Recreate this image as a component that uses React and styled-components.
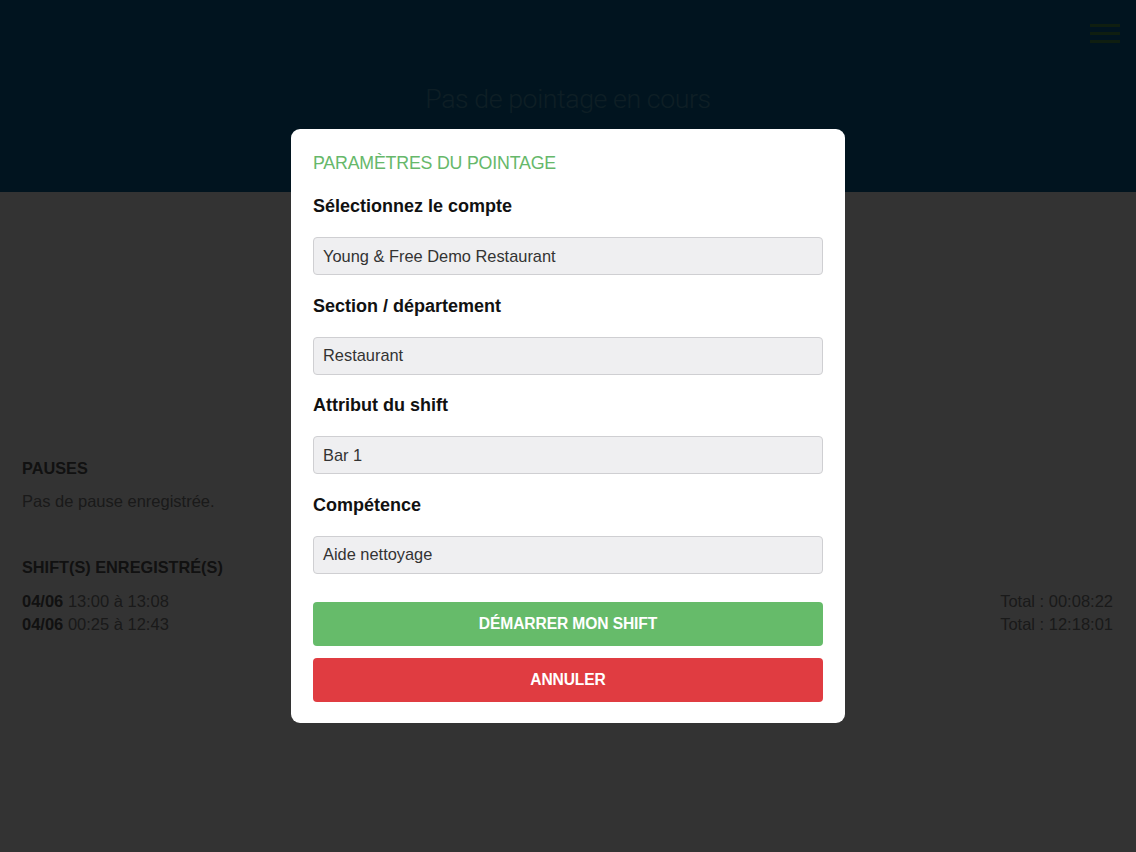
import React from "react";
import styled, { createGlobalStyle } from "styled-components";

const Global = createGlobalStyle`
  html, body { margin: 0; padding: 0; background: #ffffff; }
  body { font-family: "Liberation Sans", Arial, sans-serif; }
  * { box-sizing: border-box; }
`;

const Page = styled.div`
  width: 1136px;
  height: 852px;
  background: #ffffff;
  display: flex;
  flex-direction: column;
  overflow: hidden;
`;

const Header = styled.header`
  height: 192px;
  background: #05649b;
  display: grid;
  grid-template-rows: 1fr;
  position: relative;
`;

const HeaderTitle = styled.h1`
  margin: 0;
  padding-top: 83px;
  text-align: center;
  font-family: Roboto, "Liberation Sans", sans-serif;
  font-weight: 300;
  font-size: 26.7px;
  letter-spacing: -0.4px;
  color: #4798b8;
`;

const MenuButton = styled.button`
  position: absolute;
  top: 24px;
  right: 16px;
  width: 30px;
  height: 19px;
  padding: 0;
  border: 0;
  background: transparent;
  display: flex;
  flex-direction: column;
  justify-content: space-between;
  span {
    display: block;
    height: 3px;
    background: #4e9452;
  }
`;

const Content = styled.main`
  padding: 267px 23px 0 22px;
  font-size: 16.5px;
  color: #808080;
`;

const SectionTitle = styled.h2`
  margin: 0 0 13px;
  font-size: 16.3px;
  font-weight: bold;
  color: #555555;
  line-height: 19px;
`;

const Section = styled.section`
  margin-bottom: ${(p) => p.$gap}px;
`;

const Text = styled.p`
  margin: 0;
  line-height: 20px;
`;

const ShiftRow = styled.div`
  display: flex;
  justify-content: space-between;
  line-height: 23px;
  b { color: #555555; }
`;

const Overlay = styled.div`
  position: fixed;
  inset: 0;
  background: rgba(0, 0, 0, 0.8);
  display: flex;
  align-items: center;
  justify-content: center;
`;

const Modal = styled.div`
  width: 554px;
  background: #ffffff;
  border-radius: 9px;
  padding: 24px 22px 21px;
  display: flex;
  flex-direction: column;
`;

const ModalTitle = styled.h3`
  margin: 0 0 23px;
  font-size: 17.8px;
  font-weight: normal;
  line-height: 20px;
  color: #66b86a;
  letter-spacing: -0.2px;
`;

const Field = styled.div`
  display: flex;
  flex-direction: column;
  gap: 21px;
  margin-bottom: ${(p) => (p.$last ? 28 : 20.4)}px;
`;

const Label = styled.label`
  font-size: 18px;
  font-weight: bold;
  line-height: 20px;
  color: #111111;
`;

const Select = styled.div`
  height: 38px;
  border: 1px solid #cfcfd2;
  border-radius: 4px;
  background: #efeff1;
  padding: 0 9px;
  display: flex;
  align-items: center;
  font-size: 16.4px;
  color: #333333;
`;

const Button = styled.button`
  height: 44px;
  border: 0;
  border-radius: 4px;
  background: ${(p) => p.$bg};
  color: #ffffff;
  font-family: "Liberation Sans", Arial, sans-serif;
  font-size: 15.6px;
  font-weight: bold;
  text-transform: uppercase;
  letter-spacing: -0.1px;
  & + & { margin-top: 12px; }
`;

const fields = [
  ["Sélectionnez le compte", "Young & Free Demo Restaurant"],
  ["Section / département", "Restaurant"],
  ["Attribut du shift", "Bar 1"],
  ["Compétence", "Aide nettoyage"],
];

export default function App() {
  return (
    <>
      <Global />
      <Page>
        <Header>
          <HeaderTitle>Pas de pointage en cours</HeaderTitle>
          <MenuButton aria-label="menu">
            <span />
            <span />
            <span />
          </MenuButton>
        </Header>
        <Content>
          <Section $gap={47}>
            <SectionTitle>PAUSES</SectionTitle>
            <Text>Pas de pause enregistrée.</Text>
          </Section>
          <Section $gap={0}>
            <SectionTitle>SHIFT(S) ENREGISTRÉ(S)</SectionTitle>
            <ShiftRow>
              <span><b>04/06</b> 13:00 à 13:08</span>
              <span>Total : 00:08:22</span>
            </ShiftRow>
            <ShiftRow>
              <span><b>04/06</b> 00:25 à 12:43</span>
              <span>Total : 12:18:01</span>
            </ShiftRow>
          </Section>
        </Content>
      </Page>
      <Overlay>
        <Modal>
          <ModalTitle>PARAMÈTRES DU POINTAGE</ModalTitle>
          {fields.map(([label, value], i) => (
            <Field key={label} $last={i === fields.length - 1}>
              <Label>{label}</Label>
              <Select>{value}</Select>
            </Field>
          ))}
          <Button $bg="#66bb6a">Démarrer mon shift</Button>
          <Button $bg="#e03c41">Annuler</Button>
        </Modal>
      </Overlay>
    </>
  );
}
